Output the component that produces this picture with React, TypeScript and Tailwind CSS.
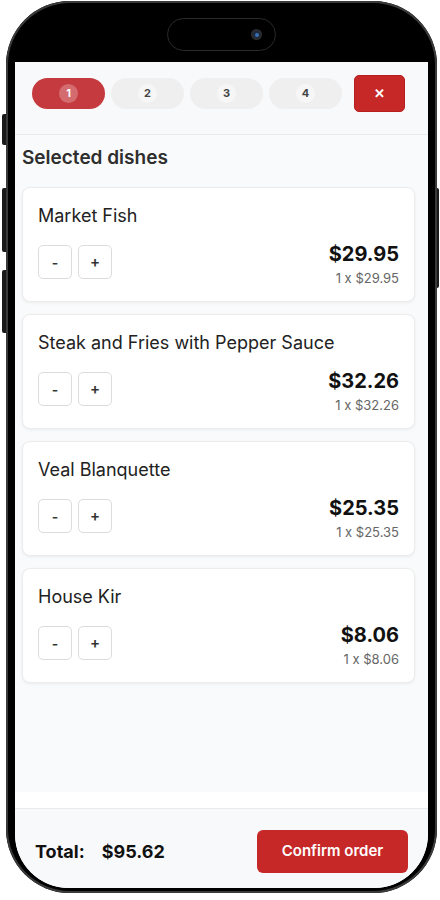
import React from 'react';

const dishes = [
  { name: 'Market Fish', price: '$29.95' },
  { name: 'Steak and Fries with Pepper Sauce', price: '$32.26' },
  { name: 'Veal Blanquette', price: '$25.35' },
  { name: 'House Kir', price: '$8.06' },
];

const tabs = ['1', '2', '3', '4'];

const App: React.FC = () => {
  return (
    <div className="relative w-[440px] h-[900px] bg-white overflow-hidden font-['Inter','Liberation_Sans',sans-serif]">
      {/* side buttons */}
      <div className="absolute left-[2px] top-[114px] w-[5px] h-[31px] rounded-l-[2px] bg-[#1a1a1a]" />
      <div className="absolute left-[2px] top-[188px] w-[5px] h-[64px] rounded-l-[2px] bg-[#1a1a1a]" />
      <div className="absolute left-[2px] top-[270px] w-[5px] h-[63px] rounded-l-[2px] bg-[#1a1a1a]" />
      <div className="absolute left-[434px] top-[188px] w-[5px] h-[100px] rounded-r-[2px] bg-[#1a1a1a]" />

      {/* phone frame */}
      <div className="relative ml-[6px] mt-[1px] w-[431px] h-[892px] rounded-[64px] bg-black pt-[9px] px-[9px] pb-[5px] shadow-[inset_0_0_0_2px_#3a3a3a]">
        <div className="w-full h-full rounded-[54px] overflow-hidden bg-black flex flex-col">
          {/* status area with dynamic island */}
          <div className="h-[52px] shrink-0 flex justify-center pt-[8px]">
            <div className="w-[109px] h-[33px] rounded-full bg-black border border-[#2a2a2a] flex items-center justify-end pr-[13px]">
              <div className="w-[11px] h-[11px] rounded-full bg-[#1b2a3d] border-[2px] border-[#2c2c30] flex items-center justify-center">
                <div className="w-[4px] h-[4px] rounded-full bg-[#3a6fb0]" />
              </div>
            </div>
          </div>

          {/* app */}
          <div className="flex-1 flex flex-col bg-white">
            {/* header */}
            <div className="h-[73px] shrink-0 bg-[#f8f9fa] border-b border-[#e9eaec] flex items-center pl-[17px] pr-[23px] pb-[9px]">
              <div className="flex gap-[6px] flex-1">
                {tabs.map((t, i) => (
                  <div
                    key={t}
                    className={
                      i === 0
                        ? 'w-[73px] h-[31px] rounded-full bg-[#c53a3f] flex items-center justify-center'
                        : 'w-[73px] h-[31px] rounded-full bg-[#efefef] flex items-center justify-center'
                    }
                  >
                    <span
                      className={
                        i === 0
                          ? 'w-[19px] h-[19px] rounded-full bg-white/25 text-white text-[11px] font-bold flex items-center justify-center'
                          : 'w-[19px] h-[19px] rounded-full bg-[#f6f6f6] text-[#444] text-[11px] font-bold flex items-center justify-center'
                      }
                    >
                      {t}
                    </span>
                  </div>
                ))}
              </div>
              <button className="w-[51px] h-[37px] rounded-[5px] bg-[#c62828] border border-[#b71f1f] text-white text-[13px] font-bold flex items-center justify-center">
                ✕
              </button>
            </div>

            {/* list */}
            <div className="h-[657px] shrink-0 bg-[#f9fafb] pl-[7px] pr-[13px] pt-[9px]">
              <h2 className="text-[19px] leading-[28px] font-semibold text-[#2e2e2e] mb-[15px]">
                Selected dishes
              </h2>
              <div className="flex flex-col gap-[12px]">
                {dishes.map((d) => (
                  <div
                    key={d.name}
                    className="bg-white rounded-[8px] border border-[#ececec] shadow-[0_1px_3px_rgba(0,0,0,0.06)] px-[15px] pt-[15px] pb-[15px]"
                  >
                    <div className="text-[18px] leading-[26px] text-[#222]">{d.name}</div>
                    <div className="flex items-center justify-between mt-[9px]">
                      <div className="flex gap-[6px]">
                        <button className="w-[34px] h-[34px] rounded-[5px] border border-[#dcdcdc] bg-white text-[14px] font-semibold text-[#333] flex items-center justify-center">
                          -
                        </button>
                        <button className="w-[34px] h-[34px] rounded-[5px] border border-[#dcdcdc] bg-white text-[15px] font-semibold text-[#333] flex items-center justify-center">
                          +
                        </button>
                      </div>
                      <div className="flex flex-col items-end translate-y-[2px]">
                        <span className="text-[20px] leading-[28px] font-bold text-[#111]">{d.price}</span>
                        <span className="text-[13px] leading-[19px] text-[#666] mt-[1px]">1 x {d.price}</span>
                      </div>
                    </div>
                  </div>
                ))}
              </div>
            </div>

            <div className="h-[16px] shrink-0 bg-white" />

            {/* footer */}
            <div className="flex-1 bg-[#f8f9fa] border-t border-[#e9eaec] flex items-start justify-between pl-[20px] pr-[20px] pt-[21px]">
              <div className="flex items-center gap-[17px] h-[43px] text-[18px] font-bold text-[#111]">
                <span>Total:</span>
                <span>$95.62</span>
              </div>
              <button className="w-[151px] h-[43px] rounded-[6px] bg-[#c62828] text-white text-[15px] font-semibold">
                Confirm order
              </button>
            </div>
          </div>
        </div>
      </div>
    </div>
  );
};

export default App;
